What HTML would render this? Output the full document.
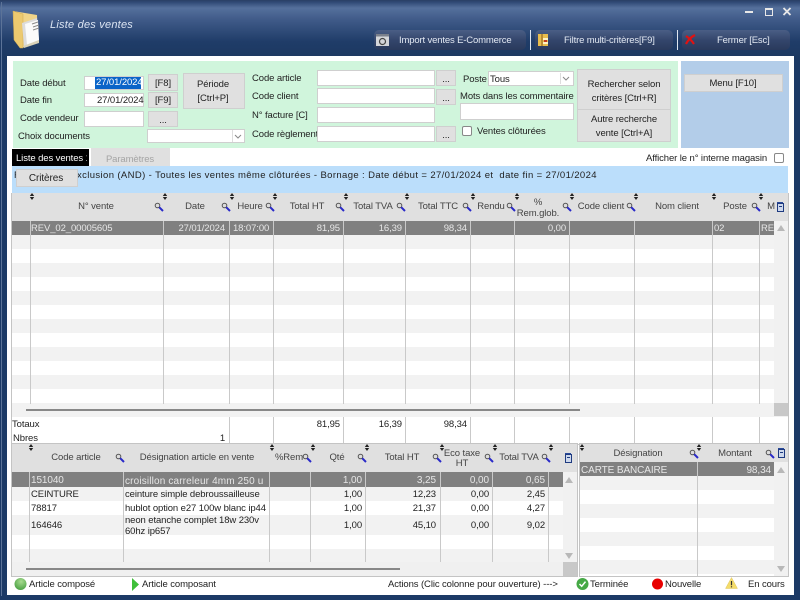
<!DOCTYPE html>
<html lang="fr"><head><meta charset="utf-8"><title>Liste des ventes</title>
<style>
html,body{margin:0;padding:0;width:800px;height:600px;overflow:hidden;background:#1c3a66}
#w{position:relative;width:800px;height:600px;overflow:hidden;font:9.5px "Liberation Sans",sans-serif;color:#222;letter-spacing:-.1px}
#w div,#w span,#w svg{position:absolute}
.t{white-space:nowrap;line-height:12px;height:12px;margin-top:1px}
.c{transform:translateX(-50%)}
.r{transform:translateX(-100%)}
.h{color:#444}
.w{color:#e6e6e6}
.b{background:#e0e0e0;border:1px solid #cfcfcf;box-sizing:border-box}
.i{background:#fff;border:1px solid #cfcfcf;box-sizing:border-box}
.d{background:linear-gradient(#4a5e85,#34466c 50%,#2a3a5c);border-radius:5px}
.l{width:1px;background:#c9c9c9}
.tt{color:#e2e8f2;font-size:9.5px;letter-spacing:-.15px;margin-top:0}
.s{height:14px}
</style></head><body><div id="w">
<svg width="0" height="0" style="left:0;top:0"><defs>
<symbol id="m" viewBox="0 0 10 10"><circle cx="3.5" cy="3.5" r="2.3" fill="#ddd" stroke="#555" stroke-width="1"/><path d="M5.2 5.2L9 9" stroke="#2a2ac8" stroke-width="2"/></symbol>
<symbol id="o" viewBox="0 0 6 7"><path d="M3 0L5.2 3H.8zM3 7L.8 4h4.4z" fill="#222"/></symbol>
<symbol id="k" viewBox="0 0 9 11"><path d="M1 1h6v1.5H1z" fill="#2a4a9a"/><path d="M1.5 2.5h6v8h-6z" fill="#cdd8ec" stroke="#1e3a80"/><path d="M3 5h3v1H3z" fill="#1e3a80"/></symbol>
</defs></svg>

<!-- frame -->
<div style="left:0;top:0;width:800px;height:60px;background:linear-gradient(#2a3e64 0,#2f4874 2px,#55709c 8px,#3f5a88 20px,#1f3c68 42px,#1c3860 60px)"></div>
<div style="left:1px;top:2px;width:1px;height:594px;background:#5c7398"></div>
<div style="left:7px;top:56px;width:787px;height:539px;background:#fff"></div>

<!-- title -->
<svg style="left:12px;top:10px" width="30" height="39" viewBox="0 0 30 39"><path d="M1 1l24 4 1 26-16 7z" fill="#f0d488"/><path d="M1 1l10 3v34H8L2 30z" fill="#ecc96f" stroke="#cfa850" stroke-width=".5"/><path d="M10 13l15-5 2 23-15 6z" fill="#dcdcdc"/><path d="M13 14l13-4 1 20-12 5z" fill="#fbfbfb"/><path d="M20 14l6-2M21 17l6-2M21 20l6-2" stroke="#8a8a8a" stroke-width="1"/><path d="M11 36l16-6v3l-15 5z" fill="#d9d2b8"/></svg>
<span class="t" style="left:50px;top:18px;font-size:11px;font-style:italic;color:#dbe4f2;letter-spacing:.22px">Liste des ventes</span>
<div style="left:745px;top:11px;width:8px;height:2px;background:#e8e8e8"></div>
<div style="left:765px;top:8px;width:6px;height:5px;border:1px solid #e8e8e8;border-top-width:2px;box-sizing:content-box"></div>
<svg style="left:782px;top:7px" width="10" height="9" viewBox="0 0 10 9"><path d="M1.5 1l7 7M8.5 1l-7 7" stroke="#e8e8e8" stroke-width="1.8"/></svg>

<div class="d" style="left:374px;top:30px;width:152px;height:20px"></div>
<svg style="left:375px;top:33px" width="15" height="14" viewBox="0 0 15 14"><path d="M1 1h13v12H1z" fill="#d4d6da"/><path d="M1 1h13v2.5H1z" fill="#7a808c"/><circle cx="7.5" cy="8.5" r="3" fill="none" stroke="#444" stroke-width="1.2"/></svg>
<span class="t tt" style="left:399px;top:35px">Import ventes E-Commerce</span>
<div style="left:530px;top:30px;width:1px;height:20px;background:#dfe6f0"></div>
<div class="d" style="left:535px;top:30px;width:138px;height:20px"></div>
<svg style="left:538px;top:34px" width="11" height="12" viewBox="0 0 11 12"><path d="M0 0h10v12H0z" fill="#e8bd4e"/><path d="M4 0v12" stroke="#8a5a18"/><path d="M5 4h5v2H5zM5 8h5v2H5z" fill="#fff2c2"/><path d="M6 6h3v2H6z" fill="#c23a20"/></svg>
<span class="t tt" style="left:564px;top:35px">Filtre multi-critères[F9]</span>
<div style="left:677px;top:30px;width:1px;height:20px;background:#dfe6f0"></div>
<div class="d" style="left:682px;top:30px;width:108px;height:20px"></div>
<svg style="left:685px;top:34px" width="11" height="11" viewBox="0 0 11 11"><path d="M1 10C3 6 6 3 10 1M1 2c3 2 6 5 8 8" stroke="#e01212" stroke-width="2.2" fill="none"/></svg>
<span class="t tt" style="left:717px;top:35px">Fermer [Esc]</span>

<!-- filter panels -->
<div style="left:13px;top:61px;width:665px;height:87px;background:#d0f5dc"></div>
<div style="left:681px;top:61px;width:108px;height:87px;background:#b3cde9"></div>

<span class="t" style="left:20px;top:77px">Date début</span>
<div class="i" style="left:84px;top:76px;width:60px;height:14px"></div>
<div style="left:95px;top:77px;width:46px;height:12px;background:#0a64c8"></div>
<span class="t" style="left:96px;top:76px;color:#fff">27/01/2024</span>
<span class="t" style="left:20px;top:94px">Date fin</span>
<div class="i" style="left:84px;top:93px;width:60px;height:14px"></div>
<span class="t" style="left:97px;top:94px">27/01/2024</span>
<span class="t" style="left:20px;top:112px">Code vendeur</span>
<div class="i" style="left:84px;top:111px;width:60px;height:16px"></div>
<span class="t" style="left:18px;top:130px">Choix documents</span>
<div class="i" style="left:147px;top:129px;width:98px;height:14px"></div>
<svg style="left:232px;top:130px" width="12" height="12" viewBox="0 0 12 12"><path d="M.5 0v12" stroke="#ddd"/><path d="M3 5l3 3 3-3" stroke="#888" fill="none"/></svg>

<div class="b" style="left:148px;top:74px;width:30px;height:17px"></div><span class="t c" style="left:163px;top:77px">[F8]</span>
<div class="b" style="left:148px;top:92px;width:30px;height:16px"></div><span class="t c" style="left:163px;top:94px">[F9]</span>
<div class="b" style="left:148px;top:111px;width:30px;height:16px"></div><span class="t c" style="left:163px;top:114px">...</span>
<div class="b" style="left:183px;top:73px;width:62px;height:36px"></div>
<span class="t c" style="left:213px;top:78px">Période</span><span class="t c" style="left:213px;top:92px">[Ctrl+P]</span>

<span class="t" style="left:252px;top:72px">Code article</span>
<div class="i" style="left:317px;top:70px;width:118px;height:16px"></div>
<div class="b" style="left:436px;top:70px;width:20px;height:16px"></div><span class="t c" style="left:446px;top:73px">...</span>
<span class="t" style="left:252px;top:90px">Code client</span>
<div class="i" style="left:317px;top:88px;width:118px;height:16px"></div>
<div class="b" style="left:436px;top:89px;width:20px;height:16px"></div><span class="t c" style="left:446px;top:92px">...</span>
<span class="t" style="left:252px;top:109px">N° facture [C]</span>
<div class="i" style="left:317px;top:107px;width:118px;height:16px"></div>
<span class="t" style="left:252px;top:128px">Code règlement</span>
<div class="i" style="left:317px;top:126px;width:118px;height:16px"></div>
<div class="b" style="left:436px;top:126px;width:20px;height:16px"></div><span class="t c" style="left:446px;top:129px">...</span>

<span class="t" style="left:463px;top:73px">Poste</span>
<div class="i" style="left:488px;top:71px;width:86px;height:15px"></div>
<span class="t" style="left:490px;top:73px">Tous</span>
<svg style="left:560px;top:73px" width="12" height="11" viewBox="0 0 12 11"><path d="M.5 0v11" stroke="#ddd"/><path d="M3 4l3 3 3-3" stroke="#888" fill="none"/></svg>
<span class="t" style="left:460px;top:90px">Mots dans les commentaire</span>
<div class="i" style="left:460px;top:103px;width:114px;height:17px"></div>
<div style="left:462px;top:126px;width:10px;height:10px;background:#fff;border:1px solid #888;border-radius:2px;box-sizing:border-box"></div>
<span class="t" style="left:477px;top:125px">Ventes clôturées</span>

<div class="b" style="left:577px;top:69px;width:94px;height:41px"></div>
<span class="t c" style="left:624px;top:78px">Rechercher selon</span><span class="t c" style="left:624px;top:92px">critères [Ctrl+R]</span>
<div class="b" style="left:577px;top:109px;width:94px;height:33px"></div>
<span class="t c" style="left:624px;top:113px">Autre recherche</span><span class="t c" style="left:624px;top:127px">vente [Ctrl+A]</span>
<div class="b" style="left:684px;top:74px;width:99px;height:18px"></div>
<span class="t c" style="left:733px;top:77px">Menu [F10]</span>

<!-- tabs -->
<div style="left:12px;top:149px;width:77px;height:18px;background:#000"></div>
<span class="t" style="left:16px;top:152px;color:#fff;width:71px;overflow:hidden">Liste des ventes 1</span>
<div style="left:91px;top:148px;width:79px;height:19px;background:#e0e0e0"></div>
<span class="t c" style="left:130px;top:153px;color:#a4a4a4">Paramètres</span>
<span class="t" style="left:646px;top:152px">Afficher le n° interne magasin</span>
<div style="left:774px;top:153px;width:10px;height:10px;background:#fff;border:1px solid #888;border-radius:2px;box-sizing:border-box"></div>

<!-- banner -->
<div style="left:12px;top:166px;width:776px;height:27px;background:#bbdefb"></div>
<span class="t" style="left:14px;top:169px;font-size:9.5px">F</span>
<span class="t" style="left:77px;top:169px;font-size:9.5px;letter-spacing:.38px">xclusion (AND) - Toutes les ventes même clôturées - Bornage : Date début = 27/01/2024 et&nbsp; date fin = 27/01/2024</span>
<div class="b" style="left:16px;top:169px;width:62px;height:18px"></div>
<span class="t c" style="left:46px;top:172px;font-size:10px">Critères</span>

<!-- grid 1 -->
<div style="left:11px;top:193px;width:778px;height:252px;border:1px solid #c4c4c4;border-top:0;box-sizing:border-box;background:#fff"></div>
<div style="left:12px;top:193px;width:776px;height:28px;background:#e0e0e0"></div>
<div style="left:12px;top:221px;width:762px;height:14px;background:#808080"></div>
<div style="left:12px;top:235px;width:762px;height:14px;background:#f2f2f2"></div>
<div style="left:12px;top:249px;width:762px;height:168px;background:repeating-linear-gradient(#fff 0,#fff 14px,#f2f2f2 14px,#f2f2f2 28px)"></div>
<div style="left:12px;top:404px;width:762px;height:13px;background:#f2f2f2"></div>
<div style="left:774px;top:221px;width:14px;height:196px;background:#f1f1f1"></div>
<div style="left:774px;top:403px;width:14px;height:13px;background:#c8c8c8"></div>
<div style="left:26px;top:409px;width:554px;height:2px;background:#888"></div>
<svg style="left:777px;top:225px" width="8" height="6" viewBox="0 0 8 6"><path d="M4 0l4 6H0z" fill="#b8b8b8"/></svg>

<div class="l" style="left:30px;top:221px;height:183px"></div>
<div class="l" style="left:163px;top:221px;height:183px"></div>
<div class="l" style="left:229px;top:221px;height:183px"></div>
<div class="l" style="left:273px;top:221px;height:183px"></div>
<div class="l" style="left:343px;top:221px;height:183px"></div>
<div class="l" style="left:405px;top:221px;height:183px"></div>
<div class="l" style="left:470px;top:221px;height:183px"></div>
<div class="l" style="left:514px;top:221px;height:183px"></div>
<div class="l" style="left:569px;top:221px;height:183px"></div>
<div class="l" style="left:634px;top:221px;height:183px"></div>
<div class="l" style="left:712px;top:221px;height:183px"></div>
<div class="l" style="left:759px;top:221px;height:183px"></div>

<div class="l" style="left:229px;top:417px;height:27px"></div>
<div class="l" style="left:273px;top:417px;height:27px"></div>
<div class="l" style="left:343px;top:417px;height:27px"></div>
<div class="l" style="left:405px;top:417px;height:27px"></div>
<div class="l" style="left:470px;top:417px;height:27px"></div>
<div class="l" style="left:514px;top:417px;height:27px"></div>
<div class="l" style="left:569px;top:417px;height:27px"></div>
<div class="l" style="left:634px;top:417px;height:27px"></div>
<div class="l" style="left:712px;top:417px;height:27px"></div>
<div class="l" style="left:759px;top:417px;height:27px"></div>

<span class="t c h" style="left:96px;top:200px">N° vente</span>
<span class="t c h" style="left:195px;top:200px">Date</span>
<span class="t c h" style="left:250px;top:200px">Heure</span>
<span class="t c h" style="left:307px;top:200px">Total HT</span>
<span class="t c h" style="left:373px;top:200px">Total TVA</span>
<span class="t c h" style="left:438px;top:200px">Total TTC</span>
<span class="t c h" style="left:491px;top:200px">Rendu</span>
<span class="t c h" style="left:538px;top:196px">%</span>
<span class="t c h" style="left:538px;top:207px">Rem.glob.</span>
<span class="t c h" style="left:601px;top:200px">Code client</span>
<span class="t c h" style="left:677px;top:200px">Nom client</span>
<span class="t c h" style="left:735px;top:200px">Poste</span>
<span class="t c h" style="left:771px;top:200px">M</span>

<svg style="left:29px;top:193px" width="6" height="7"><use href="#o"/></svg>
<svg style="left:162px;top:193px" width="6" height="7"><use href="#o"/></svg>
<svg style="left:229px;top:193px" width="6" height="7"><use href="#o"/></svg>
<svg style="left:272px;top:193px" width="6" height="7"><use href="#o"/></svg>
<svg style="left:343px;top:193px" width="6" height="7"><use href="#o"/></svg>
<svg style="left:404px;top:193px" width="6" height="7"><use href="#o"/></svg>
<svg style="left:470px;top:193px" width="6" height="7"><use href="#o"/></svg>
<svg style="left:514px;top:193px" width="6" height="7"><use href="#o"/></svg>
<svg style="left:569px;top:193px" width="6" height="7"><use href="#o"/></svg>
<svg style="left:633px;top:193px" width="6" height="7"><use href="#o"/></svg>
<svg style="left:711px;top:193px" width="6" height="7"><use href="#o"/></svg>
<svg style="left:758px;top:193px" width="6" height="7"><use href="#o"/></svg>

<svg style="left:154px;top:202px" width="10" height="10"><use href="#m"/></svg>
<svg style="left:221px;top:202px" width="10" height="10"><use href="#m"/></svg>
<svg style="left:265px;top:202px" width="10" height="10"><use href="#m"/></svg>
<svg style="left:335px;top:202px" width="10" height="10"><use href="#m"/></svg>
<svg style="left:396px;top:202px" width="10" height="10"><use href="#m"/></svg>
<svg style="left:462px;top:202px" width="10" height="10"><use href="#m"/></svg>
<svg style="left:506px;top:202px" width="10" height="10"><use href="#m"/></svg>
<svg style="left:562px;top:202px" width="10" height="10"><use href="#m"/></svg>
<svg style="left:626px;top:202px" width="10" height="10"><use href="#m"/></svg>
<svg style="left:751px;top:202px" width="10" height="10"><use href="#m"/></svg>
<svg style="left:776px;top:201px" width="9" height="11"><use href="#k"/></svg>

<span class="t w" style="left:31px;top:222px">REV_02_00005605</span>
<span class="t r w" style="left:225px;top:222px">27/01/2024</span>
<span class="t w" style="left:233px;top:222px">18:07:00</span>
<span class="t r w" style="left:340px;top:222px">81,95</span>
<span class="t r w" style="left:402px;top:222px">16,39</span>
<span class="t r w" style="left:467px;top:222px">98,34</span>
<span class="t r w" style="left:566px;top:222px">0,00</span>
<span class="t w" style="left:714px;top:222px">02</span>
<span class="t w" style="left:761px;top:222px;width:13px;overflow:hidden">REV</span>

<span class="t" style="left:12px;top:418px">Totaux</span>
<span class="t" style="left:13px;top:432px">Nbres</span>
<span class="t r" style="left:225px;top:432px">1</span>
<span class="t r" style="left:340px;top:418px">81,95</span>
<span class="t r" style="left:402px;top:418px">16,39</span>
<span class="t r" style="left:467px;top:418px">98,34</span>

<!-- grid 2 -->
<div style="left:11px;top:443px;width:567px;height:134px;border:1px solid #c4c4c4;box-sizing:border-box;background:#fff"></div>
<div style="left:12px;top:444px;width:565px;height:28px;background:#e0e0e0"></div>
<div style="left:12px;top:472px;width:551px;height:15px;background:#808080"></div>
<div style="left:12px;top:487px;width:551px;height:14px;background:#f2f2f2"></div>
<div style="left:12px;top:515px;width:551px;height:20px;background:#f2f2f2"></div>
<div style="left:12px;top:549px;width:551px;height:13px;background:#f2f2f2"></div>
<div style="left:12px;top:562px;width:551px;height:14px;background:#f0f0f0"></div>
<div style="left:563px;top:472px;width:14px;height:104px;background:#f1f1f1"></div>
<div style="left:563px;top:562px;width:14px;height:14px;background:#c8c8c8"></div>
<div style="left:26px;top:568px;width:374px;height:2px;background:#888"></div>
<svg style="left:565px;top:477px" width="8" height="6" viewBox="0 0 8 6"><path d="M4 0l4 6H0z" fill="#b8b8b8"/></svg>
<svg style="left:565px;top:553px" width="8" height="6" viewBox="0 0 8 6"><path d="M4 6l4-6H0z" fill="#b8b8b8"/></svg>

<div class="l" style="left:29px;top:472px;height:90px"></div>
<div class="l" style="left:123px;top:472px;height:90px"></div>
<div class="l" style="left:269px;top:472px;height:90px"></div>
<div class="l" style="left:310px;top:472px;height:90px"></div>
<div class="l" style="left:365px;top:472px;height:90px"></div>
<div class="l" style="left:440px;top:472px;height:90px"></div>
<div class="l" style="left:492px;top:472px;height:90px"></div>
<div class="l" style="left:548px;top:472px;height:90px"></div>

<span class="t c h" style="left:76px;top:451px">Code article</span>
<span class="t c h" style="left:197px;top:451px">Désignation article en vente</span>
<span class="t c h" style="left:289px;top:451px">%Rem</span>
<span class="t c h" style="left:337px;top:451px">Qté</span>
<span class="t c h" style="left:402px;top:451px">Total HT</span>
<span class="t c h" style="left:462px;top:447px">Eco taxe</span>
<span class="t c h" style="left:462px;top:457px">HT</span>
<span class="t c h" style="left:519px;top:451px">Total TVA</span>

<svg style="left:28px;top:444px" width="6" height="7"><use href="#o"/></svg>
<svg style="left:269px;top:444px" width="6" height="7"><use href="#o"/></svg>
<svg style="left:310px;top:444px" width="6" height="7"><use href="#o"/></svg>
<svg style="left:364px;top:444px" width="6" height="7"><use href="#o"/></svg>
<svg style="left:439px;top:444px" width="6" height="7"><use href="#o"/></svg>
<svg style="left:492px;top:444px" width="6" height="7"><use href="#o"/></svg>
<svg style="left:548px;top:444px" width="6" height="7"><use href="#o"/></svg>

<svg style="left:115px;top:453px" width="10" height="10"><use href="#m"/></svg>
<svg style="left:302px;top:453px" width="10" height="10"><use href="#m"/></svg>
<svg style="left:357px;top:453px" width="10" height="10"><use href="#m"/></svg>
<svg style="left:432px;top:453px" width="10" height="10"><use href="#m"/></svg>
<svg style="left:484px;top:453px" width="10" height="10"><use href="#m"/></svg>
<svg style="left:541px;top:453px" width="10" height="10"><use href="#m"/></svg>
<svg style="left:564px;top:452px" width="9" height="11"><use href="#k"/></svg>

<span class="t w" style="left:31px;top:474px;font-size:10px">151040</span>
<span class="t w" style="left:125px;top:475px;font-size:10px;letter-spacing:.15px">croisillon carreleur 4mm 250 u</span>
<span class="t r w" style="left:362px;top:474px;font-size:10px">1,00</span>
<span class="t r w" style="left:436px;top:474px;font-size:10px">3,25</span>
<span class="t r w" style="left:489px;top:474px;font-size:10px">0,00</span>
<span class="t r w" style="left:545px;top:474px;font-size:10px">0,65</span>

<span class="t" style="left:31px;top:488px">CEINTURE</span>
<span class="t" style="left:125px;top:488px">ceinture simple debroussailleuse</span>
<span class="t r" style="left:362px;top:488px">1,00</span>
<span class="t r" style="left:436px;top:488px">12,23</span>
<span class="t r" style="left:489px;top:488px">0,00</span>
<span class="t r" style="left:545px;top:488px">2,45</span>

<span class="t" style="left:31px;top:502px">78817</span>
<span class="t" style="left:125px;top:502px">hublot option e27 100w blanc ip44</span>
<span class="t r" style="left:362px;top:502px">1,00</span>
<span class="t r" style="left:436px;top:502px">21,37</span>
<span class="t r" style="left:489px;top:502px">0,00</span>
<span class="t r" style="left:545px;top:502px">4,27</span>

<span class="t" style="left:31px;top:519px">164646</span>
<span class="t" style="left:125px;top:514px">neon etanche complet 18w 230v</span>
<span class="t" style="left:125px;top:525px">60hz ip657</span>
<span class="t r" style="left:362px;top:519px">1,00</span>
<span class="t r" style="left:436px;top:519px">45,10</span>
<span class="t r" style="left:489px;top:519px">0,00</span>
<span class="t r" style="left:545px;top:519px">9,02</span>

<!-- grid 3 -->
<div style="left:579px;top:443px;width:210px;height:134px;border:1px solid #c4c4c4;box-sizing:border-box;background:#fff"></div>
<div style="left:580px;top:444px;width:208px;height:18px;background:#e0e0e0"></div>
<div style="left:580px;top:462px;width:194px;height:14px;background:#808080"></div>
<div style="left:580px;top:476px;width:194px;height:100px;background:repeating-linear-gradient(#f2f2f2 0,#f2f2f2 14px,#fff 14px,#fff 28px)"></div>
<div style="left:774px;top:462px;width:14px;height:114px;background:#f1f1f1"></div>
<div class="l" style="left:697px;top:462px;height:114px"></div>
<svg style="left:777px;top:467px" width="8" height="6" viewBox="0 0 8 6"><path d="M4 0l4 6H0z" fill="#b8b8b8"/></svg>
<svg style="left:777px;top:566px" width="8" height="6" viewBox="0 0 8 6"><path d="M4 6l4-6H0z" fill="#b8b8b8"/></svg>
<span class="t c h" style="left:638px;top:447px">Désignation</span>
<span class="t c h" style="left:735px;top:447px">Montant</span>
<svg style="left:579px;top:444px" width="6" height="7"><use href="#o"/></svg>
<svg style="left:696px;top:444px" width="6" height="7"><use href="#o"/></svg>
<svg style="left:689px;top:449px" width="10" height="10"><use href="#m"/></svg>
<svg style="left:765px;top:449px" width="10" height="10"><use href="#m"/></svg>
<svg style="left:777px;top:447px" width="9" height="11"><use href="#k"/></svg>
<span class="t w" style="left:581px;top:464px;font-size:10px">CARTE BANCAIRE</span>
<span class="t r w" style="left:771px;top:464px;font-size:10px">98,34</span>

<!-- status bar -->
<svg style="left:14px;top:577px" width="13" height="14" viewBox="0 0 13 14"><defs><radialGradient id="g1" cx=".55" cy=".3" r=".8"><stop offset="0" stop-color="#a8dc90"/><stop offset="1" stop-color="#3f9a3a"/></radialGradient></defs><circle cx="6.5" cy="7" r="6" fill="url(#g1)"/></svg>
<span class="t" style="left:29px;top:578px">Article composé</span>
<svg style="left:132px;top:578px" width="7" height="13" viewBox="0 0 7 13"><path d="M0 0l7 6.5L0 13z" fill="#3fbf3a"/></svg>
<span class="t" style="left:142px;top:578px">Article composant</span>
<span class="t" style="left:388px;top:578px">Actions (Clic colonne pour ouverture) ---&gt;</span>
<svg style="left:576px;top:577px" width="13" height="14" viewBox="0 0 13 14"><circle cx="6.5" cy="7" r="6" fill="#46a946"/><path d="M3.5 7l2.2 2.3L9.5 4.6" stroke="#fff" stroke-width="1.5" fill="none"/></svg>
<span class="t" style="left:590px;top:578px">Terminée</span>
<svg style="left:651px;top:577px" width="13" height="14" viewBox="0 0 13 14"><circle cx="6.5" cy="7" r="5.5" fill="#e80000"/></svg>
<span class="t" style="left:665px;top:578px">Nouvelle</span>
<svg style="left:725px;top:577px" width="13" height="12" viewBox="0 0 13 12"><path d="M6.5.5L12.5 11.5H.5z" fill="#f4dc6a" stroke="#e0c860" stroke-width=".5"/><path d="M6.5 4v4.2M6.5 9.2v1.2" stroke="#333" stroke-width="1.2"/></svg>
<span class="t" style="left:748px;top:578px">En cours</span>
</div></body></html>
